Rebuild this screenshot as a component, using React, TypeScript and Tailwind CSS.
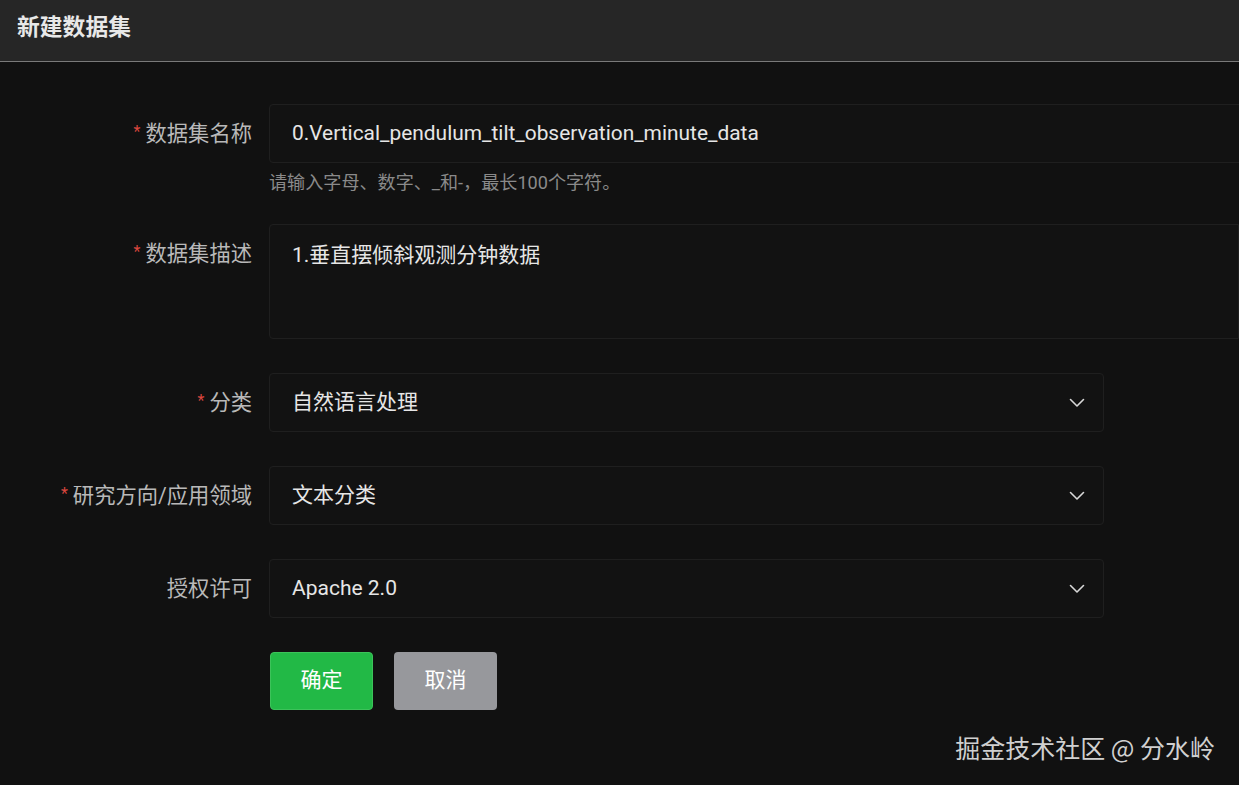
import React from "react";

const font = { fontFamily: 'Roboto, "Noto Sans CJK SC", sans-serif' };

function Chevron() {
  return (
    <svg width="16" height="10" viewBox="0 0 16 10" fill="none" className="shrink-0">
      <path d="M1.5 1.5 L8 8 L14.5 1.5" stroke="#d8d8d8" strokeWidth="1.6" strokeLinecap="round" strokeLinejoin="round" />
    </svg>
  );
}

function Label({ text, required = true }: { text: string; required?: boolean }) {
  return (
    <div className="w-[252px] shrink-0 h-[59px] flex items-center justify-end pr-0 text-[21.3px] text-[#b9b9b9]">
      {required && <span className="text-[#d9463e] text-[16px] mr-[5px] relative top-[-2px]">*</span>}
      <span>{text}</span>
    </div>
  );
}

function Select({ value }: { value: string }) {
  return (
    <div className="ml-[17px] w-[835px] h-[59px] rounded-[4px] border border-[#1f1f1f] bg-[#121212] flex items-center justify-between pl-[22px] pr-[18px] text-[21px] text-[#e6e6e6]">
      <span>{value}</span>
      <Chevron />
    </div>
  );
}

export default function App() {
  return (
    <div className="relative w-[1239px] h-[785px] overflow-hidden bg-[#111111]" style={font}>
      <div className="h-[62px] bg-[#262626] border-b border-[#7a7a7a] flex items-center pl-[17px]">
        <span className="text-[22.8px] font-bold text-[#e8e8e8] relative top-[-2px]">新建数据集</span>
      </div>

      <div className="pt-[42px] flex flex-col">
        {/* name */}
        <div className="flex">
          <Label text="数据集名称" />
          <div className="ml-[17px] flex-1 flex flex-col">
            <div className="h-[59px] w-[1000px] rounded-l-[4px] border border-[#1f1f1f] bg-[#121212] flex items-center pl-[22px] text-[20.9px] text-[#e6e6e6]">
              0.Vertical_pendulum_tilt_observation_minute_data
            </div>
            <div className="h-[61px] pt-[9px] text-[18.1px] leading-[22px] text-[#8a8a8a]">
              请输入字母、数字、_和-，最长100个字符。
            </div>
          </div>
        </div>

        {/* description */}
        <div className="flex">
          <Label text="数据集描述" />
          <div className="ml-[17px] h-[115px] w-[1000px] rounded-l-[4px] border border-[#1f1f1f] bg-[#121212] pl-[22px] pt-[16px] text-[21px] leading-[28px] text-[#e6e6e6]">
            1.垂直摆倾斜观测分钟数据
          </div>
        </div>

        <div className="h-[34px]" />
        <div className="flex">
          <Label text="分类" />
          <Select value="自然语言处理" />
        </div>

        <div className="h-[34px]" />
        <div className="flex">
          <Label text="研究方向/应用领域" />
          <Select value="文本分类" />
        </div>

        <div className="h-[34px]" />
        <div className="flex">
          <Label text="授权许可" required={false} />
          <Select value="Apache 2.0" />
        </div>

        <div className="h-[34px]" />
        <div className="flex pl-[270px] gap-[21px]">
          <button className="w-[103px] h-[58px] rounded-[4px] bg-[#22b946] border border-[#3cc35a] text-white text-[21px]">
            确定
          </button>
          <button className="w-[103px] h-[58px] rounded-[4px] bg-[#97989c] text-white text-[21px]">
            取消
          </button>
        </div>
      </div>

      <div className="absolute right-[24px] top-[729px] text-[25px] text-[#d0d0d0]" style={{ fontFamily: '"Noto Sans CJK SC", sans-serif' }}>
        掘金技术社区 @ 分水岭
      </div>
    </div>
  );
}
